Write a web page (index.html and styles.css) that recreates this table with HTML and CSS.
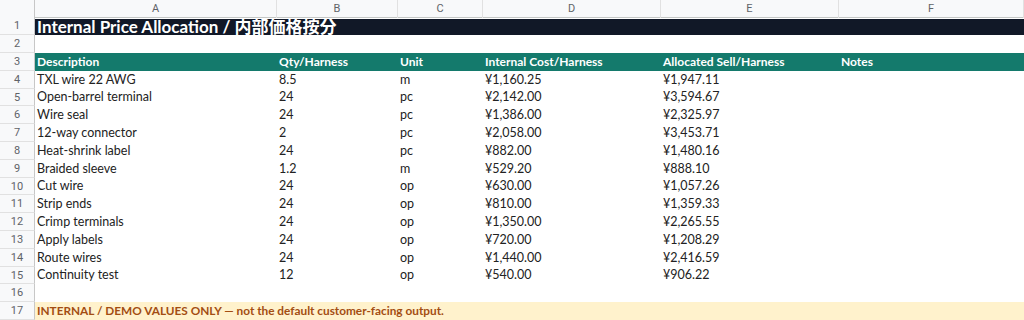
FILE: index.html
```html
<!DOCTYPE html>
<html>
<head>
<meta charset="utf-8">
<link rel="stylesheet" href="styles.css">
</head>
<body>
<div class="sheet">
  <div class="row colhead">
    <div class="rn corner"></div>
    <div class="ch">A</div><div class="ch">B</div><div class="ch">C</div><div class="ch">D</div><div class="ch">E</div><div class="ch">F</div>
  </div>
  <div class="row">
    <div class="rn">1</div>
    <div class="cell title"><span class="title-text">Internal Price Allocation / 内部価格按分</span></div>
  </div>
  <div class="row">
    <div class="rn">2</div>
    <div class="cell span"></div>
  </div>
  <div class="row head">
    <div class="rn">3</div>
    <div class="cell">Description</div><div class="cell">Qty/Harness</div><div class="cell">Unit</div><div class="cell">Internal Cost/Harness</div><div class="cell">Allocated Sell/Harness</div><div class="cell">Notes</div>
  </div>
  <div class="row"><div class="rn">4</div><div class="cell">TXL wire 22 AWG</div><div class="cell">8.5</div><div class="cell">m</div><div class="cell">¥1,160.25</div><div class="cell">¥1,947.11</div><div class="cell"></div></div>
  <div class="row"><div class="rn">5</div><div class="cell">Open-barrel terminal</div><div class="cell">24</div><div class="cell">pc</div><div class="cell">¥2,142.00</div><div class="cell">¥3,594.67</div><div class="cell"></div></div>
  <div class="row"><div class="rn">6</div><div class="cell">Wire seal</div><div class="cell">24</div><div class="cell">pc</div><div class="cell">¥1,386.00</div><div class="cell">¥2,325.97</div><div class="cell"></div></div>
  <div class="row"><div class="rn">7</div><div class="cell">12-way connector</div><div class="cell">2</div><div class="cell">pc</div><div class="cell">¥2,058.00</div><div class="cell">¥3,453.71</div><div class="cell"></div></div>
  <div class="row"><div class="rn">8</div><div class="cell">Heat-shrink label</div><div class="cell">24</div><div class="cell">pc</div><div class="cell">¥882.00</div><div class="cell">¥1,480.16</div><div class="cell"></div></div>
  <div class="row"><div class="rn">9</div><div class="cell">Braided sleeve</div><div class="cell">1.2</div><div class="cell">m</div><div class="cell">¥529.20</div><div class="cell">¥888.10</div><div class="cell"></div></div>
  <div class="row"><div class="rn">10</div><div class="cell">Cut wire</div><div class="cell">24</div><div class="cell">op</div><div class="cell">¥630.00</div><div class="cell">¥1,057.26</div><div class="cell"></div></div>
  <div class="row"><div class="rn">11</div><div class="cell">Strip ends</div><div class="cell">24</div><div class="cell">op</div><div class="cell">¥810.00</div><div class="cell">¥1,359.33</div><div class="cell"></div></div>
  <div class="row"><div class="rn">12</div><div class="cell">Crimp terminals</div><div class="cell">24</div><div class="cell">op</div><div class="cell">¥1,350.00</div><div class="cell">¥2,265.55</div><div class="cell"></div></div>
  <div class="row"><div class="rn">13</div><div class="cell">Apply labels</div><div class="cell">24</div><div class="cell">op</div><div class="cell">¥720.00</div><div class="cell">¥1,208.29</div><div class="cell"></div></div>
  <div class="row"><div class="rn">14</div><div class="cell">Route wires</div><div class="cell">24</div><div class="cell">op</div><div class="cell">¥1,440.00</div><div class="cell">¥2,416.59</div><div class="cell"></div></div>
  <div class="row"><div class="rn">15</div><div class="cell">Continuity test</div><div class="cell">12</div><div class="cell">op</div><div class="cell">¥540.00</div><div class="cell">¥906.22</div><div class="cell"></div></div>
  <div class="row">
    <div class="rn">16</div>
    <div class="cell span"></div>
  </div>
  <div class="row">
    <div class="rn">17</div>
    <div class="cell note">INTERNAL / DEMO VALUES ONLY — not the default customer-facing output.</div>
  </div>
</div>
</body>
</html>
```

FILE: styles.css
```css
* { box-sizing: border-box; }
html, body { margin: 0; padding: 0; background: #ffffff; }
body { width: 1024px; height: 320px; overflow: hidden; font-family: Lato, "Noto Sans", sans-serif; }

.sheet { display: flex; flex-direction: column; }

.row {
  display: grid;
  grid-template-columns: 35px 242px 121px 85px 178px 178px 185px;
  grid-template-rows: 17.8px;
  height: 17.8px;
  flex: none;
  font-size: 12.5px;
  line-height: 1;
  color: #222222;
}

.rn {
  background: #f8f9fa;
  color: #5f6368;
  font-family: Roboto, "Liberation Sans", sans-serif;
  font-size: 11px;
  display: flex;
  align-items: center;
  justify-content: center;
  border-right: 1px solid #c7c7c7;
  border-bottom: 1px solid #e1e1e1;
}

.colhead { height: 17.5px; grid-template-rows: 17.5px; background: #f8f9fa; border-bottom: 1px solid #c4c7c5; }
.colhead .rn { border-bottom: none; }
.ch {
  font-family: Roboto, "Liberation Sans", sans-serif;
  font-size: 11px;
  color: #5f6368;
  display: flex;
  align-items: center;
  justify-content: center;
  border-right: 1px solid #e1e1e1;
}

.cell {
  padding: 0 2px;
  display: flex;
  align-items: center;
  white-space: nowrap;
  overflow: visible;
  min-width: 0;
}

.span, .title, .note { grid-column: 2 / 8; }

.title {
  background: #111827;
  color: #ffffff;
  font-weight: 700;
  font-size: 17px;
  font-family: Lato, "Noto Sans CJK JP", sans-serif;
  margin-top: 1px;
}
.title-text { line-height: 16px; display: block; }

.head .cell {
  background: #147a6c;
  color: #ffffff;
  font-weight: 700;
  font-size: 12px;
}

.note {
  background: #fff2cc;
  color: #a34d12;
  font-weight: 700;
  font-size: 11.8px;
}
```
